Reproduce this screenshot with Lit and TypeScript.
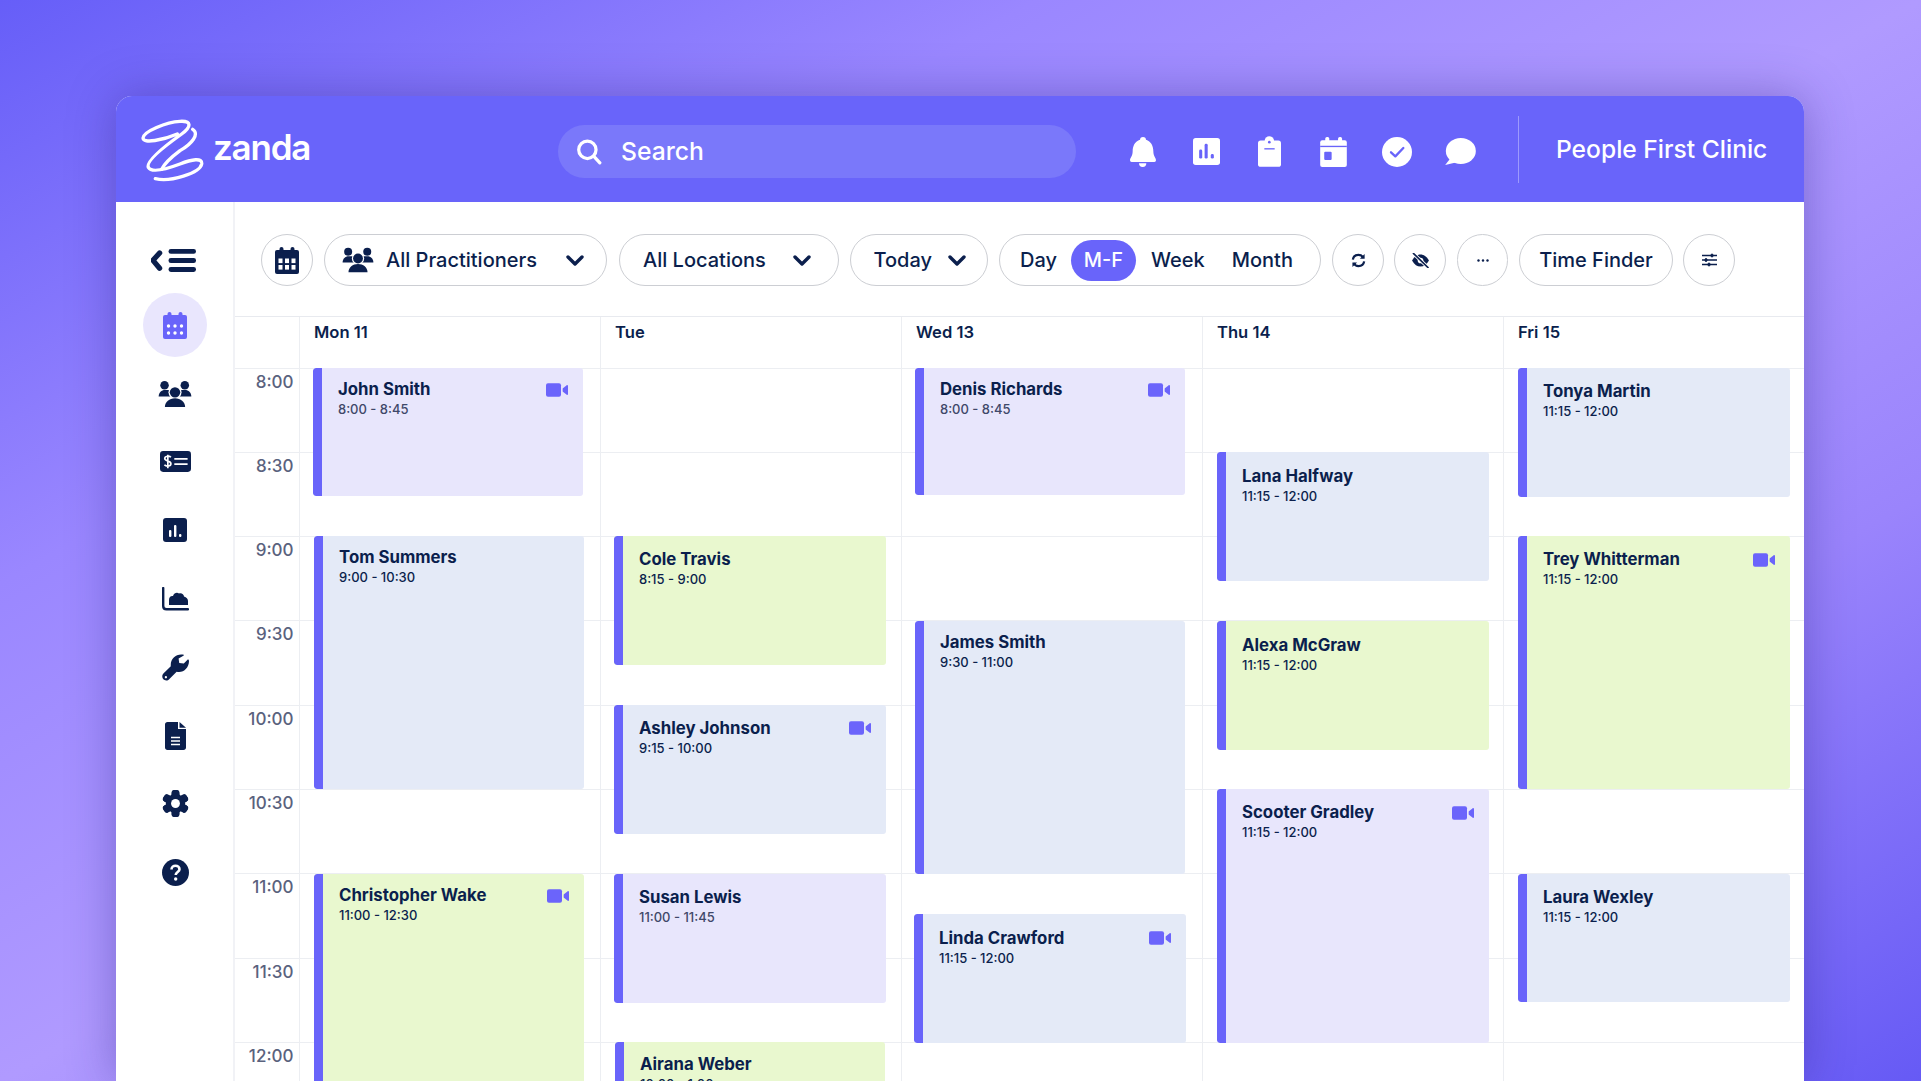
import { LitElement, html, css, svg } from "lit";
import { customElement } from "lit/decorators.js";

type Ev = { name: string; time: string; kind: string; video?: boolean; muted?: boolean; x: number; w: number; top: number; h: number; dy: number };

const days: { label: string; events: Ev[] }[] = [
  { label: "Mon 11", events: [
    { name: "John Smith", time: "8:00 - 8:45", kind: "lilac", video: true, muted: true, x: 13, w: 270, top: 0, h: 128, dy: 1 },
    { name: "Tom Summers", time: "9:00 - 10:30", kind: "blue", x: 14, w: 270, top: 168.6, h: 253, dy: 0 },
    { name: "Christopher Wake", time: "11:00 - 12:30", kind: "green", video: true, x: 14, w: 270, top: 506, h: 400, dy: 1 },
  ]},
  { label: "Tue", events: [
    { name: "Cole Travis", time: "8:15 - 9:00", kind: "green", x: 13, w: 272, top: 168.6, h: 129, dy: 2.5 },
    { name: "Ashley Johnson", time: "9:15 - 10:00", kind: "blue", video: true, x: 13, w: 272, top: 337, h: 129, dy: 2.5 },
    { name: "Susan Lewis", time: "11:00 - 11:45", kind: "lilac", muted: true, x: 13, w: 272, top: 506, h: 129, dy: 2.5 },
    { name: "Airana Weber", time: "10:00 - 1:00", kind: "green", x: 14, w: 270, top: 674.5, h: 100, dy: 1 },
  ]},
  { label: "Wed 13", events: [
    { name: "Denis Richards", time: "8:00 - 8:45", kind: "lilac", video: true, muted: true, x: 13, w: 270, top: 0, h: 127, dy: 1 },
    { name: "James Smith", time: "9:30 - 11:00", kind: "blue", x: 13, w: 270, top: 253, h: 253, dy: 1 },
    { name: "Linda Crawford", time: "11:15 - 12:00", kind: "blue", video: true, x: 12, w: 272, top: 546, h: 129, dy: 3.5 },
  ]},
  { label: "Thu 14", events: [
    { name: "Lana Halfway", time: "11:15 - 12:00", kind: "blue", x: 14, w: 272, top: 84.3, h: 129, dy: 3.5 },
    { name: "Alexa McGraw", time: "11:15 - 12:00", kind: "green", x: 14, w: 272, top: 253, h: 129, dy: 3.5 },
    { name: "Scooter Gradley", time: "11:15 - 12:00", kind: "lilac", video: true, x: 14, w: 272, top: 421.5, h: 254, dy: 2.5 },
  ]},
  { label: "Fri 15", events: [
    { name: "Tonya Martin", time: "11:15 - 12:00", kind: "blue", x: 14, w: 272, top: 0, h: 129, dy: 2.5 },
    { name: "Trey Whitterman", time: "11:15 - 12:00", kind: "green", video: true, x: 14, w: 272, top: 168.6, h: 253, dy: 2.5 },
    { name: "Laura Wexley", time: "11:15 - 12:00", kind: "blue", x: 14, w: 272, top: 506, h: 128, dy: 2.5 },
  ]},
];

const hours = ["8:00", "8:30", "9:00", "9:30", "10:00", "10:30", "11:00", "11:30", "12:00"];

const bell = svg`<path d="M99 82C93 82 90 86 90 90C75 95 68 108 68 125C68 140 60 145 60 152Q60 157 65 157H133Q138 157 138 152C138 145 130 140 130 125C130 108 123 95 108 90C108 86 105 82 99 82Z"/><path d="M87 161a11 11 0 0 0 22 0z"/>`;
const chart = svg`<rect x="250" y="88" width="79" height="79" rx="8"/><g fill="#6964fa"><rect x="268" y="122" width="9" height="26" rx="4"/><rect x="284" y="105" width="9" height="43" rx="4"/><rect x="302" y="135" width="9" height="13" rx="4"/></g>`;
const clip = svg`<rect x="446" y="92" width="69" height="79" rx="8"/><circle cx="480" cy="93" r="14"/><circle cx="480" cy="97" r="4" fill="#6964fa"/><rect x="465" y="115" width="31" height="4" fill="#6964fa"/>`;
const cal = svg`<rect x="631" y="92" width="79" height="79" rx="6"/><rect x="646" y="82" width="12" height="20" rx="5"/><rect x="684" y="82" width="12" height="20" rx="5"/><rect x="631" y="108" width="79" height="4" fill="#6964fa"/><rect x="643" y="126" width="22" height="24" rx="3" fill="#6964fa"/>`;
const check = svg`<circle cx="861" cy="124" r="45"/><path d="M843 125L856 137L880 112" fill="none" stroke="#6964fa" stroke-width="7" stroke-linecap="round" stroke-linejoin="round"/>`;
const bubble = svg`<ellipse cx="1052" cy="120" rx="45" ry="39"/><path d="M1022 140L1005 162L1040 154Z"/>`;

const headerIcons = [
  { vb: "60 82 78 90", w: 26, h: 30, c: bell },
  { vb: "250 88 79 79", w: 27, h: 27, c: chart },
  { vb: "446 79 69 92", w: 23, h: 31, c: clip },
  { vb: "631 82 79 89", w: 27, h: 30, c: cal },
  { vb: "816 79 90 90", w: 30, h: 30, c: check },
  { vb: "1005 81 92 81", w: 31, h: 27, c: bubble },
];

const calFill = (hole: string, round: boolean) => svg`
  <rect x="0" y="3" width="24" height="24" rx="2"/>
  <rect x="4.5" y="0" width="4" height="6" rx="2"/><rect x="15.5" y="0" width="4" height="6" rx="2"/>
  ${round
    ? [5.5, 12, 18.5].map(x => [14, 21].map(y => svg`<circle cx="${x}" cy="${y}" r="1.7" fill="${hole}"/>`))
    : [3.5, 10, 16.5].map(x => [11.5, 18].map(y => svg`<rect x="${x}" y="${y}" width="4" height="4.6" fill="${hole}"/>`))}
`;

const people = (vb: string, w: number, h: number) => html`<svg viewBox="${vb}" width="${w}" height="${h}" fill="currentColor">
  <circle cx="135" cy="463" r="13"/><circle cx="197" cy="463" r="13"/>
  <path d="M117 498C117 486 126 478 136 478H198C208 478 217 486 217 498Z"/>
  <circle cx="167" cy="485" r="20" fill="#fff"/>
  <path d="M128 536C128 514 146 497 167 497C188 497 206 514 206 536Z" fill="#fff"/>
  <circle cx="167" cy="485" r="16"/>
  <path d="M136 530C136 514 150 503 167 503C184 503 198 514 198 530Z"/>
</svg>`;

const gear = svg`<g transform="translate(14 14)">
  ${[0, 60, 120, 180, 240, 300].map(a => svg`<rect x="-4" y="-14" width="8" height="28" rx="3" transform="rotate(${a})"/>`)}
  <circle r="10"/><circle r="4.6" fill="#fff"/></g>`;

const chev = html`<svg class="chev" viewBox="0 0 18 11" width="18" height="11"><path d="M2 2L9 9L16 2" fill="none" stroke="currentColor" stroke-width="3.4" stroke-linecap="round" stroke-linejoin="round"/></svg>`;

const sideIcons = [
  html`<svg viewBox="0 0 24 27" width="24" height="27" fill="#6964fa">${calFill("#fff", true)}</svg>`,
  people("115 448 104 84", 34, 28),
  html`<svg viewBox="121 664 91 61" width="31" height="21"><rect x="121" y="664" width="91" height="61" rx="9" fill="currentColor"/><path d="M153 682C148 677 135 678 135 686C135 694 153 691 153 701C153 709 139 710 134 704M144 675V714" fill="none" stroke="#fff" stroke-width="5"/><path d="M163 687H202M163 702H202" stroke="#fff" stroke-width="5"/></svg>`,
  html`<svg viewBox="0 0 24 24" width="24" height="24"><rect width="24" height="24" rx="3" fill="currentColor"/><g fill="#fff"><rect x="6" y="12" width="2.4" height="7" rx="1"/><rect x="11" y="7" width="2.4" height="12" rx="1"/><rect x="16" y="16" width="2.4" height="3" rx="1"/></g></svg>`,
  html`<svg viewBox="0 0 27 24" width="27" height="24" fill="currentColor"><path d="M1.2 1V19C1.2 21 2.5 22.3 4.5 22.3H26" fill="none" stroke="currentColor" stroke-width="2.4" stroke-linecap="round"/><path d="M7 18V13C7 10 9 8.5 11 9C12 6 15 5 17 6.500C19 5.500 22 7 22 9.500C24.500 10 26 12 26 14V18Z"/></svg>`,
  html`<svg viewBox="125 40 83 80" width="27" height="27" fill="currentColor"><path d="M192 41C170 36 150 52 152 76L130 98C122 106 126 120 138 120C142 120 145 118 147 116L170 93C190 98 208 82 208 60C208 58 207 56 205 55L192 68L178 66L176 52L192 43Z"/><circle cx="137" cy="110" r="3.500" fill="#fff"/></svg>`,
  html`<svg viewBox="0 0 21 28" width="21" height="28"><path d="M2.500 0H13V7H21V25.500C21 27 20 28 18.500 28H2.500C1 28 0 27 0 25.500V2.500C0 1 1 0 2.500 0Z" fill="currentColor"/><path d="M14.500 0L21 5.800H14.500Z" fill="currentColor"/><path d="M6 15.500H15M6 19H15M6 22.500H15" stroke="#fff" stroke-width="1.500"/></svg>`,
  html`<svg viewBox="0 0 28 28" width="27" height="27" fill="currentColor">${gear}</svg>`,
  html`<svg viewBox="0 0 27 27" width="27" height="27"><circle cx="13.500" cy="13.500" r="13.500" fill="currentColor"/><path d="M9.500 10.500C9.500 8 11.300 6.800 13.500 6.800C15.800 6.800 17.500 8.200 17.500 10.200C17.500 13 13.700 13 13.700 16" fill="none" stroke="#fff" stroke-width="2.600"/><circle cx="13.700" cy="20" r="1.700" fill="#fff"/></svg>`,
];

const video = html`<svg class="vid" viewBox="738 69 66 41" width="22" height="14"><rect x="738" y="69" width="45" height="41" rx="6"/><path d="M788 85L800 75C802 74 804 75 804 77V102C804 104 802 105 800 104L788 94Z"/></svg>`;

@customElement("app-root")
export class AppRoot extends LitElement {
  static styles = css`
    :host { display: block; width: 1921px; height: 1081px; overflow: hidden; font-family: Inter, "Noto Sans", sans-serif; color: #0b1f4d; }
    .page { box-sizing: border-box; width: 1921px; height: 1081px; padding: 96px 117px 0 116px; overflow: hidden;
      background: linear-gradient(to bottom right, #665ef8 0%, #9a87ff 27%, #b09aff 50%, #9a84fc 73%, #665af5 100%); }
    .window { height: 985px; overflow: hidden; background: #fff; border-radius: 16px 16px 0 0; display: flex; flex-direction: column;
      box-shadow: 0 0 48px rgba(40, 30, 130, .38); }

    header { height: 106px; flex: none; background: #6964fa; color: #fff; display: flex; align-items: center; padding-left: 24px; }
    .logo { width: 418px; display: flex; align-items: center; gap: 8px; margin-top: 2px; }
    .logo span { font-size: 35px; font-weight: 600; letter-spacing: -1.2px; line-height: 1; margin-top: -6px; }
    .search { box-sizing: border-box; width: 518px; height: 53px; margin-top: 5px; border-radius: 27px; background: #7a78fa; display: flex; align-items: center; padding-left: 18px; gap: 19px; font-size: 24.700px; font-weight: 500; }
    .search span { margin-top: -2px; }
    .hicons { display: flex; margin: 5px 0 0 35px; }
    .hicons div { width: 63.500px; display: flex; justify-content: center; align-items: center; }
    .hicons svg { fill: #fff; }
    .divider { width: 1px; height: 67px; background: rgba(255,255,255,.35); margin-left: 26px; }
    .clinic { padding-left: 37px; font-size: 24.600px; font-weight: 500; white-space: nowrap; }

    .body { flex: 1; min-height: 0; display: flex; }
    nav { width: 119px; box-sizing: border-box; flex: none; border-right: 2px solid #f1f2f6; padding: 47px 0 0 1px; display: flex; flex-direction: column; align-items: center; }
    .burger { margin: 0 0 19px -3px; display: block; }
    .item { width: 64px; height: 68.400px; display: flex; align-items: center; justify-content: center; position: relative; color: #0b1f4d; }
    .item.on::before { content: ""; position: absolute; left: 0; top: 2px; width: 64px; height: 64px; border-radius: 50%; background: #e9e6fd; }
    .item svg { position: relative; }

    main { flex: 1; min-width: 0; }
    .toolbar { height: 114px; box-sizing: border-box; padding: 32px 0 0 26px; display: flex; align-items: flex-start; gap: 11px; }
    .pill { box-sizing: border-box; height: 52px; border: 1.500px solid #ccced3; border-radius: 26px; display: flex; align-items: center; font-size: 20px; font-weight: 500; white-space: nowrap; flex: none; }
    .round { width: 52px; justify-content: center; }
    .narrow { width: 51px; }
    .tight { margin-left: -1px; }
    .spread { justify-content: space-between; padding: 0 23px 0 23px; }
    .prac { width: 283px; padding: 0 22px 0 17px; }
    .prac .lbl { display: flex; align-items: center; gap: 12px; }
    .loc { width: 220px; margin-left: 1px; padding-right: 27px; }
    .today { width: 138px; padding: 0 21px 0 22.500px; }
    .seg { width: 322px; padding-left: 20px; gap: 15px; }
    .seg .act { width: 65px; height: 41px; margin-left: -1px; border-radius: 21px; background: #6964fa; color: #fff; display: flex; align-items: center; justify-content: center; font-weight: 500; }
    .seg .month { margin-left: 12px; }
    .tf { width: 154px; justify-content: center; }

    .cal { display: grid; grid-template-columns: 65px repeat(5, 301px); border-top: 1.500px solid #e8eaef; }
    .col { border-right: 1.500px solid #eceef2; box-sizing: border-box; min-width: 0; }
    .head { box-sizing: border-box; height: 50.500px; padding: 5px 0 0 14px; font-size: 16.600px; font-weight: 600; line-height: 20px; }
    .tcell, .cell { box-sizing: border-box; height: 84.300px; border-top: 1.500px solid #eceef2; }
    .tcell { text-align: right; padding: 3px 5.500px 0 0; font-size: 17px; font-weight: 500; line-height: 20px; color: #5a627e; }
    .rows { position: relative; }
    .ev { position: absolute; box-sizing: border-box; border-radius: 3px; padding: 10px 15px 0 25px; overflow: hidden; }
    .ev::before { content: ""; position: absolute; left: 0; top: 0; bottom: 0; width: 9px; background: #6964fa; border-radius: 3px 0 0 3px; }
    .lilac { background: #e8e6fc; }
    .blue { background: #e4eaf7; }
    .green { background: #e9f8cf; }
    .top { display: flex; justify-content: space-between; align-items: center; }
    .name { font-size: 16.800px; font-weight: 650; line-height: 21px; white-space: nowrap; }
    .vid { fill: #6b64fb; flex: none; }
    .time { font-size: 13px; font-weight: 500; line-height: 18px; white-space: nowrap; }
    .muted { color: #3f4869; }
  `;

  render() {
    return html`<div class="page"><div class="window">
      <header>
        <div class="logo">
          <svg viewBox="60 52 195 195" width="65" height="65" fill="none" stroke="#fff" stroke-width="10" stroke-linecap="round" stroke-linejoin="round">
            <path d="M106 234C150 245 240 218 245 190C248 170 215 176 180 190C140 205 95 218 85 200C76 180 150 125 185 100C215 78 215 60 180 62C140 64 70 92 69 112C69 130 130 118 172 100"/>
            <path d="M218 86C240 100 215 130 180 150C160 165 135 185 125 206"/>
          </svg>
          <span>zanda</span>
        </div>
        <div class="search">
          <svg viewBox="0 0 24 24" width="26" height="26" fill="none" stroke="#fff" stroke-width="3" stroke-linecap="round"><circle cx="10.500" cy="10" r="8"/><path d="M16.500 16L22 22"/></svg>
          <span>Search</span>
        </div>
        <div class="hicons">${headerIcons.map(i => html`<div><svg viewBox="${i.vb}" width="${i.w}" height="${i.h}">${i.c}</svg></div>`)}</div>
        <div class="divider"></div>
        <div class="clinic">People First Clinic</div>
      </header>
      <div class="body">
        <nav>
          <svg class="burger" viewBox="92 58 136 69" width="45" height="23" fill="#0b1f4d">
            <path d="M118 70L98 92L118 116" fill="none" stroke="#0b1f4d" stroke-width="16" stroke-linecap="round" stroke-linejoin="round"/>
            <rect x="145" y="58" width="83" height="14" rx="7"/><rect x="145" y="85" width="83" height="15" rx="7"/><rect x="145" y="112" width="83" height="15" rx="7"/>
          </svg>
          ${sideIcons.map((ic, n) => html`<div class="item ${n === 0 ? "on" : ""}">${ic}</div>`)}
        </nav>
        <main>
          <div class="toolbar">
            <div class="pill round"><svg viewBox="0 0 24 27" width="24" height="27" fill="#0b1f4d">${calFill("#fff", false)}</svg></div>
            <div class="pill spread prac"><span class="lbl">${people("115 448 104 84", 32, 26)}All Practitioners</span>${chev}</div>
            <div class="pill spread loc"><span>All Locations</span>${chev}</div>
            <div class="pill spread today"><span>Today</span>${chev}</div>
            <div class="pill seg"><span>Day</span><span class="act">M-F</span><span>Week</span><span class="month">Month</span></div>
            <div class="pill round"><svg viewBox="0 0 16 16" width="15" height="15" fill="none" stroke="#0b1f4d" stroke-width="2.400"><path d="M2 7C2.500 3.800 5 2 8 2C10.300 2 12 3 13 5"/><path d="M14 9C13.500 12.200 11 14 8 14C5.700 14 4 13 3 11"/><path d="M14.500 1V6H9.500Z" fill="#0b1f4d" stroke="none"/><path d="M1.500 15V10H6.500Z" fill="#0b1f4d" stroke="none"/></svg></div>
            <div class="pill round tight"><svg viewBox="0 0 20 16" width="19" height="15"><path d="M1 8C3.500 3.500 6.500 1.500 10 1.500C13.500 1.500 16.500 3.500 19 8C16.500 12.500 13.500 14.500 10 14.500C6.500 14.500 3.500 12.500 1 8Z" fill="#0b1f4d"/><circle cx="10" cy="8" r="3" fill="#fff"/><path d="M2.500 0.500L18 15.500" stroke="#fff" stroke-width="3.500"/><path d="M2.500 0.500L18 15.500" stroke="#0b1f4d" stroke-width="1.800" stroke-linecap="round"/></svg></div>
            <div class="pill round narrow"><svg viewBox="0 0 12 3" width="12" height="3" fill="#0b1f4d"><circle cx="1.500" cy="1.500" r="1.200"/><circle cx="6" cy="1.500" r="1.200"/><circle cx="10.500" cy="1.500" r="1.200"/></svg></div>
            <div class="pill tf">Time Finder</div>
            <div class="pill round tight"><svg viewBox="0 0 15 14" width="15" height="14" fill="#0b1f4d" stroke="#0b1f4d"><path d="M0 2.500H15M0 7H15M0 11.500H15" stroke-width="1.500"/><rect x="9" y="1" width="2" height="3" rx="1"/><rect x="3" y="5.500" width="2" height="3" rx="1"/><rect x="6" y="10" width="2" height="3" rx="1"/></svg></div>
          </div>
          <div class="cal">
            <div class="col">
              <div class="head"></div>
              ${hours.map(h => html`<div class="tcell">${h}</div>`)}
            </div>
            ${days.map(d => html`<div class="col">
              <div class="head">${d.label}</div>
              <div class="rows">
                ${hours.map(() => html`<div class="cell"></div>`)}
                ${d.events.map(e => html`<div class="ev ${e.kind}" style="left:${e.x}px;width:${e.w}px;top:${e.top}px;height:${e.h}px;padding-top:${10.5 + e.dy}px">
                  <div class="top"><span class="name">${e.name}</span>${e.video ? video : ""}</div>
                  <div class="time ${e.muted ? "muted" : ""}">${e.time}</div>
                </div>`)}
              </div>
            </div>`)}
          </div>
        </main>
      </div>
    </div></div>`;
  }
}
